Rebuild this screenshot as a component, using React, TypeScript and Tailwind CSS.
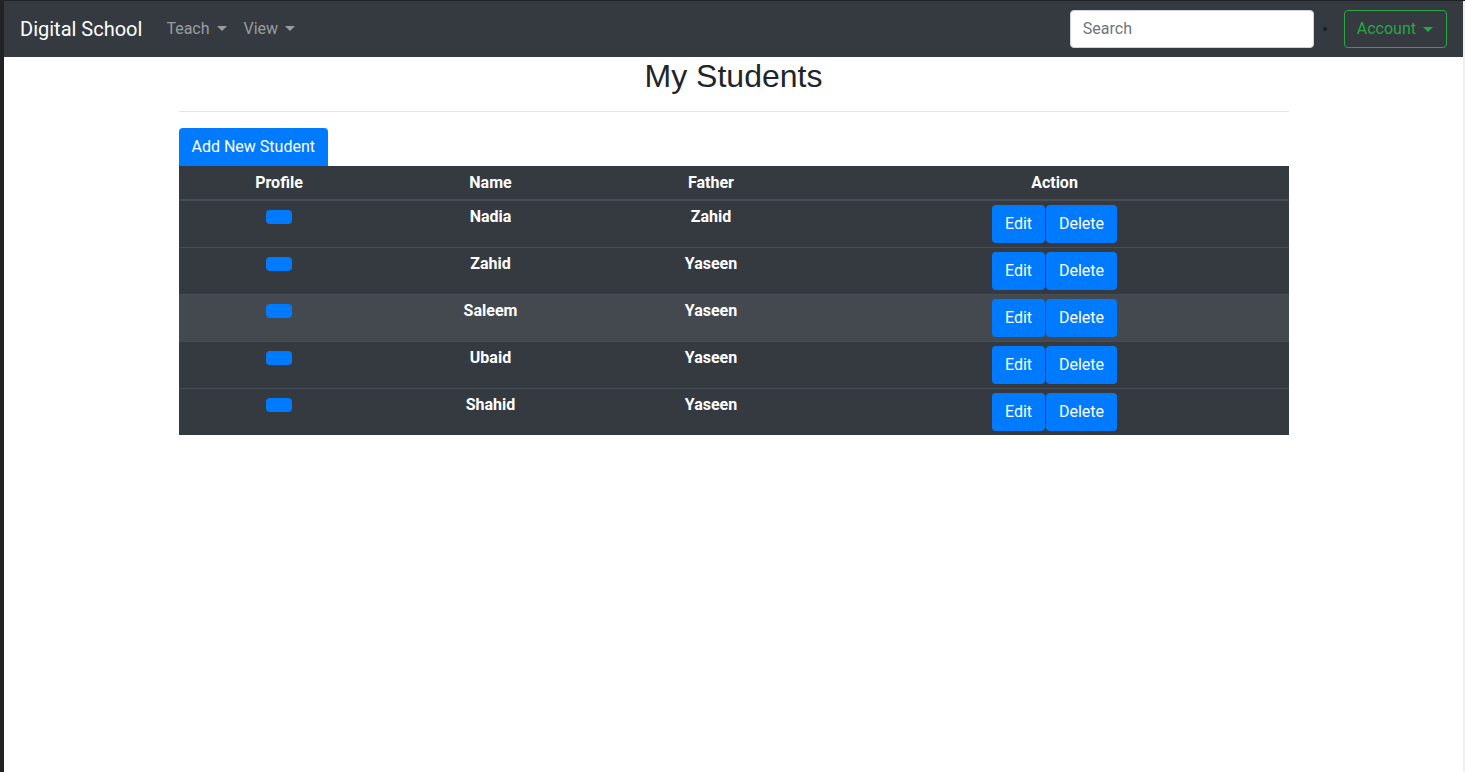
import React from "react";

const students = [
  { name: "Nadia", father: "Zahid" },
  { name: "Zahid", father: "Yaseen" },
  { name: "Saleem", father: "Yaseen", hover: true },
  { name: "Ubaid", father: "Yaseen" },
  { name: "Shahid", father: "Yaseen" },
];

function Caret() {
  return (
    <span className="ml-[7px] inline-block h-0 w-0 border-x-[5px] border-t-[5px] border-x-transparent border-t-current align-[3px]" />
  );
}

export default function App() {
  return (
    <div
      className="flex h-[772px] w-[1465px] flex-col overflow-hidden bg-white text-[16px] text-[#212529]"
      style={{ fontFamily: "Roboto, 'Liberation Sans', sans-serif" }}
    >
      <div className="h-[1px] w-full bg-[#202225]" />
      <div className="flex flex-1">
        <div className="w-[4px] bg-[#202225]" />
        <div className="flex flex-1 flex-col">
          {/* Navbar */}
          <nav className="flex h-[56px] items-center bg-[#343a40] px-[16px]">
            <span className="mr-[16px] text-[20px] leading-[30px] text-white">Digital School</span>
            <span className="pl-[8px] pr-[9px] leading-[24px] text-[#9a9da0]">
              Teach
              <Caret />
            </span>
            <span className="px-[8px] leading-[24px] text-[#9a9da0]">
              View
              <Caret />
            </span>
            <div className="flex-1" />
            <div className="flex h-[38px] w-[244px] items-center rounded-[4px] border border-[#ced4da] bg-white px-[12px] text-[#6c757d]">
              Search
            </div>
            <span className="ml-[9px] mr-[17px] h-[4px] w-[4px] rounded-full bg-[#1c1f22]" />
            <div className="flex h-[38px] items-center rounded-[4px] border border-[#28a745] pl-[12px] pr-[13px] text-[#28a745]">
              Account
              <Caret />
            </div>
          </nav>

          {/* Content */}
          <div className="mx-auto w-[1110px]">
            <h2
              className="text-center text-[32px] leading-[38px]"
              style={{ fontFamily: "'Liberation Sans', Arial, sans-serif" }}
            >
              My Students
            </h2>
            <div className="mt-[16px] mb-[16px] h-[1px] bg-[#e5e5e5]" />
            <div className="inline-flex h-[38px] items-center rounded-t-[4px] bg-[#007bff] px-[13px] text-white">
              Add New Student
            </div>
            <div className="bg-[#343a40] text-white">
              <div className="grid h-[35px] grid-cols-[201px_222px_219px_468px] border-b-2 border-[#454d55] pt-[5px] text-center font-bold leading-[24px]">
                <div>Profile</div>
                <div>Name</div>
                <div>Father</div>
                <div>Action</div>
              </div>
              {students.map((s, i) => (
                <div
                  key={s.name}
                  className={`grid grid-cols-[201px_222px_219px_468px] text-center ${
                    i > 0 ? "border-t border-[#454d55]" : ""
                  } ${s.hover ? "bg-[#43494e]" : ""}`}
                >
                  <div className="h-[46px] py-[4px]">
                    <div className="flex h-[24px] items-center justify-center">
                      <span className="h-[14px] w-[26px] rounded-[4px] bg-[#007bff]" />
                    </div>
                  </div>
                  <div className="py-[4px] font-bold leading-[24px]">{s.name}</div>
                  <div className="py-[4px] font-bold leading-[24px]">{s.father}</div>
                  <div className="flex justify-center py-[4px]">
                    <div className="flex h-[38px] gap-[1px]">
                      <div className="flex w-[53px] items-center justify-center rounded-[4px] bg-[#007bff]">Edit</div>
                      <div className="flex w-[71px] items-center justify-center rounded-[4px] bg-[#007bff]">Delete</div>
                    </div>
                  </div>
                </div>
              ))}
            </div>
          </div>
        </div>
        <div className="w-[2px] bg-[#efefef]" />
      </div>
    </div>
  );
}
